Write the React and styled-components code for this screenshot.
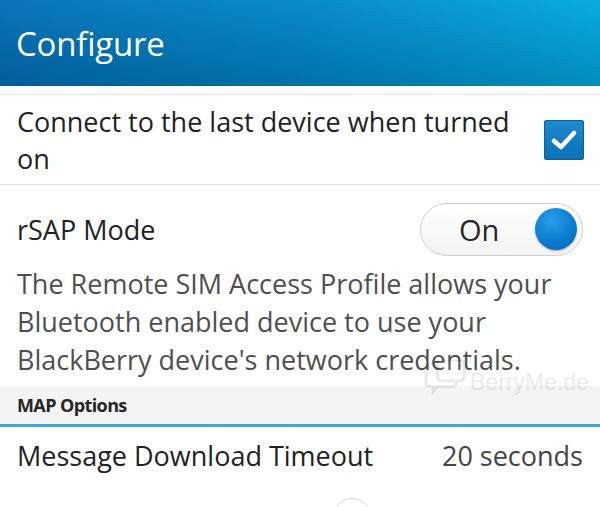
import React from "react";
import styled, { createGlobalStyle } from "styled-components";

const Global = createGlobalStyle`
  html, body { margin: 0; padding: 0; background: #ffffff; }
  body { font-family: "Open Sans", "Noto Sans", sans-serif; overflow: hidden; }
`;

const Screen = styled.div`
  position: relative;
  width: 600px;
  height: 507px;
  overflow: hidden;
  background: #ffffff;
`;

const TitleBar = styled.header`
  height: 86px;
  display: flex;
  align-items: center;
  padding-left: 16px;
  background:
    linear-gradient(to bottom, rgba(255,255,255,0.04), rgba(0,0,0,0.16)),
    linear-gradient(to right, #0070b6 0%, #0086c8 50%, #00a8df 100%);
`;

const Title = styled.h1`
  margin: 0;
  font-weight: 400;
  font-size: 33px;
  color: #ffffff;
  letter-spacing: -0.2px;
`;

const Divider = styled.div`
  height: 1px;
  background: #e3e3e3;
  margin-top: ${(p) => p.$top || 0}px;
`;

const Row = styled.div`
  display: flex;
  align-items: center;
  justify-content: space-between;
  padding: ${(p) => p.$pt || 0}px 17px 0 17px;
  height: ${(p) => p.$h}px;
  box-sizing: border-box;
`;

const Label = styled.div`
  font-size: 27px;
  line-height: 37px;
  color: #222222;
  max-width: ${(p) => p.$max || "none"};
`;

const Value = styled.div`
  font-size: 27px;
  color: #444444;
`;

const Checkbox = styled.div`
  width: 40px;
  height: 40px;
  border-radius: 3px;
  background: linear-gradient(to bottom, #1e8ad0, #0c6fb4);
  box-shadow: inset 0 0 0 1px #0a5f9c;
  display: flex;
  align-items: center;
  justify-content: center;
  margin-right: -1px;
`;

const Toggle = styled.div`
  width: 163px;
  height: 53px;
  border-radius: 27px;
  border: 1px solid #cfcfcf;
  background: linear-gradient(to bottom, #ffffff, #f3f3f3);
  display: flex;
  align-items: center;
  justify-content: space-between;
  padding: 0 5px 0 38px;
  box-sizing: border-box;
`;

const ToggleText = styled.span`
  font-size: 29px;
  color: #262626;
`;

const Knob = styled.div`
  width: 42px;
  height: 42px;
  border-radius: 50%;
  background: radial-gradient(circle at 40% 30%, #2a9ee6 0%, #0a7dd0 55%, #0662ac 100%);
  box-shadow: 0 1px 2px rgba(0,0,0,0.3);
`;

const Description = styled.p`
  margin: 0;
  padding: 2px 17px 0 17px;
  font-size: 27px;
  line-height: 38px;
  color: #4f4f4f;
  height: 123px;
  box-sizing: border-box;
`;

const SectionHeader = styled.div`
  height: 41px;
  background: #f4f4f4;
  border-bottom: 3px solid #3ba9d9;
  display: flex;
  align-items: center;
  padding-left: 17px;
  font-size: 18px;
  font-weight: 700;
  letter-spacing: -0.6px;
  color: #262626;
  box-sizing: border-box;
`;

const Watermark = styled.div`
  position: absolute;
  left: 424px;
  top: 360px;
  display: flex;
  align-items: flex-end;
  gap: 4px;
  opacity: 0.1;
  pointer-events: none;
`;

const WatermarkText = styled.span`
  font-family: "Liberation Sans", Arial, sans-serif;
  font-size: 23px;
  color: #444;
  margin-bottom: 2px;
`;

const BottomHint = styled.div`
  position: absolute;
  left: 333px;
  top: 498px;
  width: 36px;
  height: 36px;
  border-radius: 50%;
  border: 1px solid #d8d8d8;
`;

export default function App() {
  return (
    <Screen>
      <Global />
      <TitleBar>
        <Title>Configure</Title>
      </TitleBar>
      <Divider $top={8} />
      <Row $h={89}>
        <Label $max="510px">Connect to the last device when turned on</Label>
        <Checkbox>
          <svg width="28" height="24" viewBox="0 0 28 24">
            <path d="M4 13 L11 19 L24 5" fill="none" stroke="#ffffff" strokeWidth="4.5" strokeLinecap="round" strokeLinejoin="round" />
          </svg>
        </Checkbox>
      </Row>
      <Divider />
      <Row $h={78} $pt={10}>
        <Label>rSAP Mode</Label>
        <Toggle>
          <ToggleText>On</ToggleText>
          <Knob />
        </Toggle>
      </Row>
      <Description>
        The Remote SIM Access Profile allows your Bluetooth enabled device to use your BlackBerry device's network credentials.
      </Description>
      <SectionHeader>MAP Options</SectionHeader>
      <Row $h={56}>
        <Label>Message Download Timeout</Label>
        <Value>20 seconds</Value>
      </Row>
      <Watermark>
        <svg width="42" height="38" viewBox="0 0 44 40">
          <rect x="2" y="4" width="32" height="24" rx="4" fill="none" stroke="#333" strokeWidth="3" />
          <rect x="14" y="0" width="28" height="22" rx="4" fill="#fff" stroke="#333" strokeWidth="3" />
          <path d="M8 28 L8 38 L16 28" fill="#333" />
        </svg>
        <WatermarkText>BerryMe.de</WatermarkText>
      </Watermark>
      <BottomHint />
    </Screen>
  );
}
